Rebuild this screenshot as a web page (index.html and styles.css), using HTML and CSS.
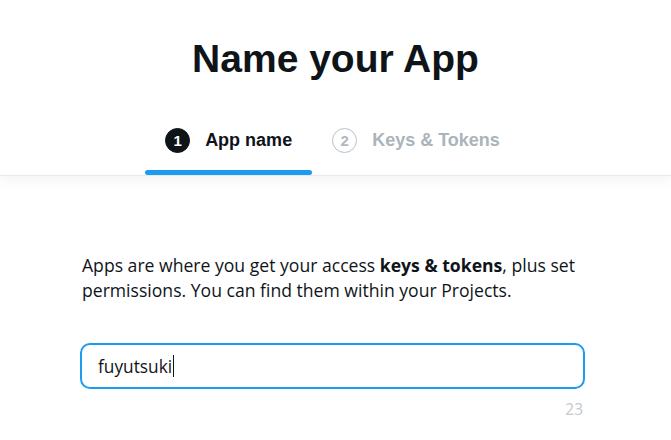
FILE: index.html
```html
<!DOCTYPE html>
<html lang="en">
<head>
<meta charset="utf-8">
<title>Name your App</title>
<link rel="stylesheet" href="styles.css">
</head>
<body>
<header class="header">
  <h1 class="title">Name your App</h1>
  <nav class="steps">
    <div class="step step-active">
      <span class="step-num">1</span>
      <span class="step-label">App name</span>
    </div>
    <div class="step">
      <span class="step-num">2</span>
      <span class="step-label">Keys &amp; Tokens</span>
    </div>
  </nav>
</header>
<main class="content">
  <p class="desc">Apps are where you get your access <b>keys &amp; tokens</b>, plus set permissions. You can find them within your Projects.</p>
  <div class="field"><span class="field-text">fuyutsuki</span><span class="caret"></span></div>
  <div class="counter">23</div>
</main>
</body>
</html>
```
FILE: styles.css
```css
* { box-sizing: border-box; }
html, body { margin: 0; padding: 0; background: #fff; }
body {
  font-family: "Liberation Sans", Arial, sans-serif;
  color: #0f1419;
  width: 671px;
  overflow: hidden;
}
.header {
  border-bottom: 1px solid #e6eaec;
  box-shadow: 0 4px 12px rgba(0, 0, 0, 0.05);
  padding-top: 35px;
}
.title {
  margin: 0;
  text-align: center;
  font-size: 39px;
  line-height: 48px;
  font-weight: 700;
  letter-spacing: 0;
}
.steps {
  display: flex;
  justify-content: center;
  margin-top: 40px;
  padding-right: 6px;
}
.step {
  display: flex;
  align-items: center;
  gap: 15px;
  padding: 0 20px 17px 20px;
  height: 52px;
  position: relative;
  color: #aab4bb;
}
.step-active { color: #0f1419; }
.step-active::after {
  content: "";
  position: absolute;
  left: 0;
  right: 0;
  bottom: 0;
  height: 5px;
  border-radius: 3px;
  background: #1d9bf0;
}
.step-num {
  width: 25px;
  height: 25px;
  border-radius: 50%;
  border: 1.5px solid #b9c1c7;
  display: flex;
  align-items: center;
  justify-content: center;
  font-size: 15px;
  font-weight: 700;
  color: #b0b9bf;
}
.step-active .step-num {
  background: #0f1419;
  border-color: #0f1419;
  color: #fff;
}
.step-label {
  font-size: 18px;
  font-weight: 700;
}
.content {
  width: 505px;
  margin-left: 80px;
  padding-top: 77px;
}
.desc {
  margin: 0;
  padding-left: 2px;
  font-family: "Open Sans", "Liberation Sans", sans-serif;
  font-size: 17.6px;
  line-height: 25px;
}
.desc b { font-weight: 700; }
.field {
  margin-top: 40px;
  height: 46px;
  border: 2px solid #1d9bf0;
  border-radius: 10px;
  display: flex;
  align-items: center;
  padding-left: 16px;
  font-family: "Open Sans", "Liberation Sans", sans-serif;
  font-size: 17.3px;
}
.caret {
  display: inline-block;
  width: 1px;
  height: 22px;
  background: #0f1419;
  margin-left: 1px;
}
.counter {
  text-align: right;
  font-family: "Open Sans", "Liberation Sans", sans-serif;
  font-size: 15.5px;
  color: #c2cad0;
  margin-top: 9px;
  padding-right: 2px;
}
```
